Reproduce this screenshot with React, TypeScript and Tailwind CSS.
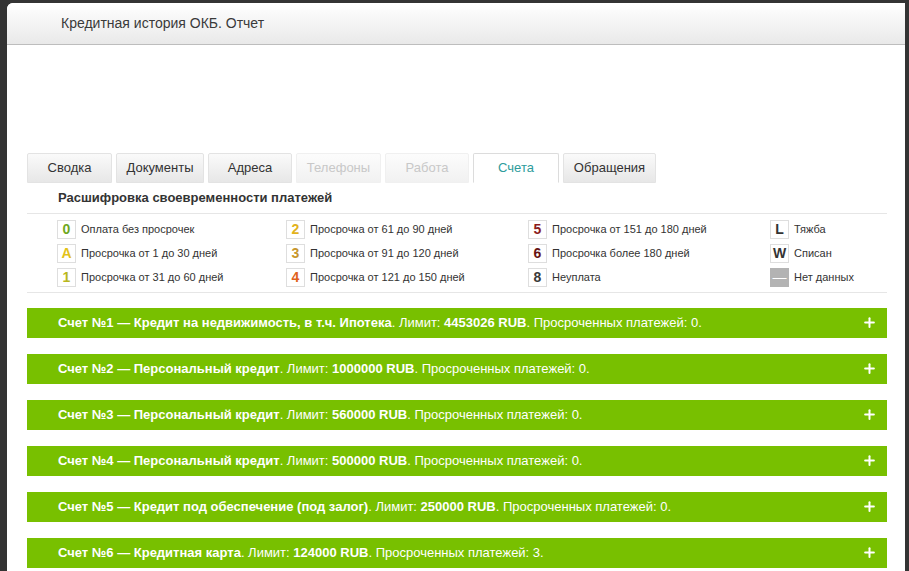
import React from 'react';
import { Plus } from 'lucide-react';

type Tab = { label: string; state: 'normal' | 'disabled' | 'active'; w: string };

const tabs: Tab[] = [
  { label: 'Сводка', state: 'normal', w: 'w-[85px]' },
  { label: 'Документы', state: 'normal', w: 'w-[88px]' },
  { label: 'Адреса', state: 'normal', w: 'w-[84px]' },
  { label: 'Телефоны', state: 'disabled', w: 'w-[85px]' },
  { label: 'Работа', state: 'disabled', w: 'w-[84px]' },
  { label: 'Счета', state: 'active', w: 'w-[86px]' },
  { label: 'Обращения', state: 'normal', w: 'w-[93px]' },
];

type Legend = { code: string; text: string; color: string; gray?: boolean; bold?: boolean };

// legend laid out column by column, three rows each
const legendCols: Legend[][] = [
  [
    { code: '0', text: 'Оплата без просрочек', color: 'text-[#6fa81e]' },
    { code: 'A', text: 'Просрочка от 1 до 30 дней', color: 'text-[#e3c21a]' },
    { code: '1', text: 'Просрочка от 31 до 60 дней', color: 'text-[#b9b71e]' },
  ],
  [
    { code: '2', text: 'Просрочка от 61 до 90 дней', color: 'text-[#e2b21c]' },
    { code: '3', text: 'Просрочка от 91 до 120 дней', color: 'text-[#c7962c]' },
    { code: '4', text: 'Просрочка от 121 до 150 дней', color: 'text-[#e0621c]' },
  ],
  [
    { code: '5', text: 'Просрочка от 151 до 180 дней', color: 'text-[#8a1c1c]' },
    { code: '6', text: 'Просрочка более 180 дней', color: 'text-[#661313]' },
    { code: '8', text: 'Неуплата', color: 'text-[#3a3a3a]' },
  ],
  [
    { code: 'L', text: 'Тяжба', color: 'text-[#333]', bold: true },
    { code: 'W', text: 'Списан', color: 'text-[#333]', bold: true },
    { code: '—', text: 'Нет данных', color: 'text-white', gray: true },
  ],
];

type Account = { num: number; kind: string; limit: string; overdue: number };

const accounts: Account[] = [
  { num: 1, kind: 'Кредит на недвижимость, в т.ч. Ипотека', limit: '4453026', overdue: 0 },
  { num: 2, kind: 'Персональный кредит', limit: '1000000', overdue: 0 },
  { num: 3, kind: 'Персональный кредит', limit: '560000', overdue: 0 },
  { num: 4, kind: 'Персональный кредит', limit: '500000', overdue: 0 },
  { num: 5, kind: 'Кредит под обеспечение (под залог)', limit: '250000', overdue: 0 },
  { num: 6, kind: 'Кредитная карта', limit: '124000', overdue: 3 },
];

const tabClass = (state: Tab['state']) => {
  switch (state) {
    case 'active':
      return 'bg-white border-[#dcdcdc] border-b-white text-[#2e9c9c]';
    case 'disabled':
      return 'bg-gradient-to-b from-[#fcfcfc] to-[#f1f1f1] border-[#f0f0f0] text-[#c8c8c8]';
    default:
      return 'bg-gradient-to-b from-[#fafafa] to-[#e7e7e7] border-[#e3e3e3] text-[#333]';
  }
};

export default function App() {
  return (
    <div className="w-[909px] h-[571px] overflow-hidden bg-[#333333] pt-[3px] pl-[7px] font-['Liberation_Sans',Arial,sans-serif]">
      <div className="w-[898px] h-[568px] bg-white rounded-tl-[6px] overflow-hidden flex flex-col">
        {/* window header */}
        <div className="h-[42px] shrink-0 bg-gradient-to-b from-white to-[#e9e9e9] border-b border-[#bdbdbd] flex items-center pl-[54px]">
          <span className="text-[14px] text-[#3a3a3a]">Кредитная история ОКБ. Отчет</span>
        </div>

        <div className="pt-[108px] px-[20px]">
          {/* tabs */}
          <div className="flex items-end gap-[4px] h-[30px]">
            {tabs.map((t) => (
              <div
                key={t.label}
                className={`h-[30px] ${t.w} flex items-center justify-center border rounded-t-[2px] text-[13px] ${tabClass(t.state)}`}
              >
                {t.label}
              </div>
            ))}
          </div>

          {/* legend */}
          <div className="pl-[31px] pt-[5px] pb-[5px] text-[13px] font-bold text-[#333]">
            Расшифровка своевременности платежей
          </div>
          <div className="w-[860px] border-t border-b border-[#e6e6e6] pt-[7px] pb-[5px] pl-[30px] grid grid-cols-[229px_242px_242px_1fr]">
            {legendCols.map((col, ci) => (
              <div key={ci} className="flex flex-col gap-[6px]">
                {col.map((l) => (
                  <div key={l.code} className="flex items-center gap-[5px] h-[18px]">
                    <div
                      className={`w-[19px] h-[19px] flex items-center justify-center text-[14px] ${
                        l.gray ? 'bg-[#b3b3b3] border border-[#b3b3b3]' : 'border border-[#dedede] bg-white'
                      } ${l.bold || ci < 3 ? 'font-bold' : ''} ${l.color}`}
                    >
                      {l.code}
                    </div>
                    <span className="text-[11px] text-[#333]">{l.text}</span>
                  </div>
                ))}
              </div>
            ))}
          </div>

          {/* accounts */}
          <div className="mt-[15px] flex flex-col gap-[16px] w-[860px]">
            {accounts.map((a) => (
              <div key={a.num} className="h-[30px] bg-[#78c000] flex items-center justify-between pl-[31px] pr-[10px] text-white text-[13px]">
                <span>
                  <b>Счет №{a.num} — {a.kind}</b>. Лимит: <b>{a.limit} RUB</b>. Просроченных платежей: {a.overdue}.
                </span>
                <Plus size={15} strokeWidth={3.2} className="text-white" />
              </div>
            ))}
          </div>
        </div>
      </div>
    </div>
  );
}
